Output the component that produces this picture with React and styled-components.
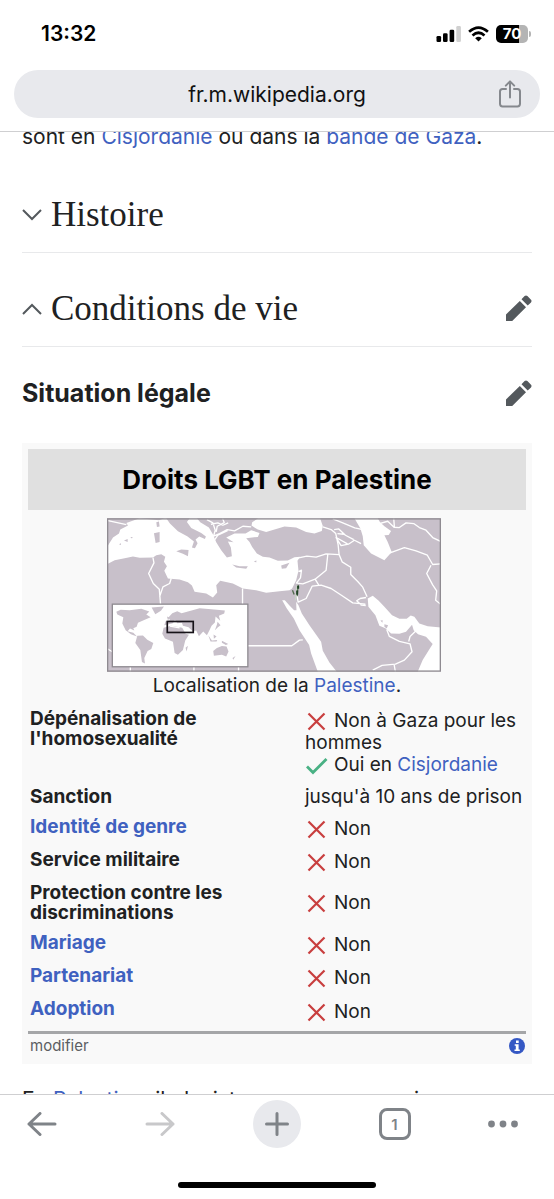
import React from "react";
import styled, { createGlobalStyle } from "styled-components";

const sans = `Inter, "Liberation Sans", sans-serif`;
const serif = `"Liberation Serif", serif`;
const link = "#3f61c0";
const grey = "#7f8388";

const GlobalStyle = createGlobalStyle`
  * { box-sizing: border-box; }
  body { margin: 0; background: #fff; color: #202122; font-family: ${sans}; }
  button { border: 0; padding: 0; background: none; font: inherit; color: inherit; cursor: pointer; }
  svg { display: block; flex: none; }
`;

const Shell = styled.div`
  display: flex;
  flex-direction: column;
  height: 100vh;
`;

const TopChrome = styled.header`
  flex: none;
  padding: 0 14px 13px;
  border-bottom: 1px solid #cfcfd1;
`;

const StatusBar = styled.div`
  display: flex;
  align-items: center;
  justify-content: space-between;
  height: 70px;
  padding: 0 9px 3px 27px;
  color: #000;
`;

const Time = styled.time`
  font-size: 21px;
  font-weight: 600;
`;

const StatusIcons = styled.div`
  display: flex;
  align-items: center;
  gap: 7px;
`;

const AddressBar = styled.div`
  display: grid;
  grid-template-columns: 60px 1fr 60px;
  align-items: center;
  height: 48px;
  border-radius: 24px;
  background: #e8e9ed;
`;

const Address = styled.button`
  grid-column: 2;
  color: #111;
  font-size: 21px;
  text-align: center;
`;

const ShareButton = styled.button`
  display: grid;
  place-items: center;
  height: 48px;
`;

const Page = styled.main`
  flex: 1;
  min-height: 0;
  overflow: hidden auto;
  scrollbar-width: none;
  padding: 0 22px;
`;

const Article = styled.article`
  margin-top: -11px;
`;

const Paragraph = styled.p`
  margin: 0;
  font-size: 21px;
  line-height: 32px;
`;

const Link = styled.a`
  color: ${link};
  text-decoration: none;
`;

const SectionBar = styled.div`
  display: flex;
  align-items: center;
  justify-content: space-between;
  height: 94px;
  margin-top: ${(p) => (p.$first ? "6px" : "0")};
  padding: 33px 0 15px;
  border-bottom: 1px solid #e8e9eb;
`;

const SectionTitle = styled.h2`
  margin: 0;
  font-family: ${serif};
  font-size: 35px;
  font-weight: 400;
  line-height: 44px;
`;

const SectionToggle = styled.button`
  display: flex;
  align-items: center;
  gap: 9px;
`;

const SubsectionBar = styled.div`
  display: flex;
  align-items: center;
  justify-content: space-between;
  height: 96px;
  padding-bottom: 4px;
`;

const SubsectionTitle = styled.h3`
  margin: 0;
  font-size: 25px;
  font-weight: 700;
`;

const EditButton = styled.button`
  display: grid;
  place-items: center;
`;

const Infobox = styled.section`
  margin-bottom: 20px;
  padding: 6px;
  background: #f9f9f9;
`;

const InfoboxTitle = styled.h4`
  margin: 0 0 8px;
  background: #e0e0e0;
  color: #000;
  font-size: 26px;
  font-weight: 700;
  line-height: 61px;
  text-align: center;
`;

const Figure = styled.figure`
  display: flex;
  flex-direction: column;
  align-items: center;
  margin: 0;
`;

const MapFrame = styled.svg`
  margin-right: 6px;
`;

const Caption = styled.figcaption`
  height: 32px;
  font-size: 19px;
  line-height: 28px;
`;

const Facts = styled.table`
  width: 100%;
  border-collapse: collapse;
  border-bottom: 3px solid #a5a6a8;
  font-size: 19px;
`;

const FactRow = styled.tr`
  height: ${(p) => p.$height}px;
`;

const FactName = styled.th`
  width: 277px;
  padding: 5px 8px 5px 2px;
  font-weight: 700;
  line-height: 20px;
  text-align: left;
  vertical-align: top;
`;

const FactValue = styled.td`
  padding: 0;
  line-height: 22px;
  vertical-align: middle;
`;

const Mark = styled.svg`
  display: inline-block;
  margin-right: 5px;
  vertical-align: -5px;
`;

const InfoboxFooter = styled.div`
  display: flex;
  align-items: center;
  justify-content: space-between;
  height: 24px;
  padding: 0 1px 0 2px;
`;

const SmallLink = styled.a`
  color: #5c5e62;
  font-size: 15px;
  text-decoration: none;
`;

const BottomChrome = styled.footer`
  flex: none;
  display: flex;
  flex-direction: column;
  align-items: center;
  justify-content: space-between;
  height: 105px;
  padding: 5px 18px 11px;
  border-top: 1px solid #cfcfd1;
`;

const Toolbar = styled.nav`
  display: flex;
  justify-content: space-between;
  width: 100%;
`;

const ToolButton = styled.button`
  display: flex;
  align-items: center;
  justify-content: ${(p) => (p.$start ? "flex-start" : "center")};
  width: 48px;
  height: 48px;
  border-radius: 50%;
  background: ${(p) => (p.$filled ? "#e8e9ed" : "transparent")};
`;

const TabCount = styled.span`
  width: 32px;
  height: 32px;
  border: 3px solid ${grey};
  border-radius: 8px;
  color: ${grey};
  font-size: 15px;
  font-weight: 600;
  line-height: 27px;
`;

const HomeIndicator = styled.div`
  width: 198px;
  height: 6px;
  border-radius: 3px;
  background: #000;
`;

const Signal = () => (
  <svg width="25" height="16" viewBox="0 0 25 16">
    <rect x="0.5" y="10" width="4.6" height="6" rx="1.3" />
    <rect x="7" y="7.3" width="4.6" height="8.7" rx="1.3" />
    <rect x="13.6" y="3.8" width="4.6" height="12.2" rx="1.3" />
    <rect x="20.3" y="0" width="4.6" height="16" rx="1.3" fill="#d0d0d0" />
  </svg>
);

const Wifi = () => (
  <svg width="21" height="16" viewBox="0 0 21 16" fill="none" stroke="#000" strokeWidth="2.7">
    <path d="M1.1 5.8 Q10.5 -2.6 19.9 5.8" />
    <path d="M4.5 9.4 Q10.5 4.1 16.5 9.4" />
    <path d="M7.2 12.2 Q10.5 9.4 13.8 12.2 L10.5 15.6Z" fill="#000" stroke="none" />
  </svg>
);

const BatteryBox = styled.div`
  display: flex;
  align-items: center;
`;

const BatteryLevel = styled.span`
  width: 32px;
  height: 18px;
  border-radius: 5px;
  background: linear-gradient(90deg, #000 72%, #b4b4b4 72%);
  color: #fff;
  font-size: 15px;
  font-weight: 700;
  line-height: 18px;
  text-align: center;
`;

const BatteryTip = styled.span`
  width: 2px;
  height: 6px;
  margin-left: 1px;
  border-radius: 0 2px 2px 0;
  background: #b4b4b4;
`;

const Share = () => (
  <svg width="22" height="28" viewBox="0 0 22 28" fill="none" stroke="#85888d" strokeWidth="2" strokeLinecap="round" strokeLinejoin="round">
    <path d="M7 9H3.6Q1 9 1 11.6V23.8Q1 26.5 3.6 26.5H18.4Q21 26.5 21 23.8V11.6Q21 9 18.4 9H15M11 17.5V1.5M6.8 5.6 11 1.4l4.2 4.2" />
  </svg>
);

const Chevron = ({ up }) => (
  <svg width="20" height="12" viewBox="0 0 20 12" fill="none" stroke="#54595d" strokeWidth="2">
    <path d={up ? "M1 11 10 2l9 9" : "M1 1l9 9 9-9"} />
  </svg>
);

const Pencil = () => (
  <svg width="27" height="27" viewBox="0 0 27 27" fill="#54595d">
    <path d="M1 19.5 14.8 6l6.2 6.3L7.2 26H1ZM16.5 4.3 19.6 1.1Q21 0 22.4 1.1L26 4.8Q27 6 26 7.4L22.7 10.6Z" />
  </svg>
);

const Cross = () => (
  <Mark width="24" height="22" viewBox="0 0 24 22" fill="none" stroke="#c83e3e" strokeWidth="2.2" role="img" aria-label="Refusé">
    <path d="M3.5 3.5 19.5 19.5M19.5 3.5 3.5 19.5" />
  </Mark>
);

const Check = () => (
  <Mark width="24" height="22" viewBox="0 0 24 22" fill="none" stroke="#49b184" strokeWidth="2.8" role="img" aria-label="Accepté">
    <path d="M2 12.5 8 18.5 21.5 5" />
  </Mark>
);

const InfoIcon = () => (
  <svg width="16" height="16" viewBox="0 0 16 16">
    <circle cx="8" cy="8" r="8" fill="#3558c4" />
    <path d="M7 2.6h2.7v2.3H7ZM5.7 6.3h3.9v5.3h1.2v1.5H5.5v-1.5h1.3V7.8H5.7Z" fill="#fff" />
  </svg>
);

const LocationMap = () => (
  <MapFrame width="334" height="154" viewBox="22 24 1003 461" role="img" aria-label="Carte de localisation">
    <rect x="22" y="24" width="1003" height="461" fill="#c8c0ca" />
    <g fill="#fff">
      <path d="M22 162 45 150 75 144 100 139 120 143 160 142 170 135 185 132 197 140 193 155 202 168 194 182 205 205 240 208 265 216 277 226 285 245 320 250 340 262 353 247 350 225 362 212 400 220 430 235 470 240 500 248 540 243 570 240 578 235 590 210 597 182 594 152 602 140 585 141 565 151 535 152 510 142 490 140 472 130 458 110 450 95 440 84 475 80 480 68 455 60 438 70 405 70 380 82 402 96 385 94 394 112 397 138 382 142 365 120 350 96 340 72 328 52 302 36 292 24 195 24 178 30 120 24 80 38 85 46 62 58 58 70 40 82 22 110Z" />
      <path d="M476 24 458 36 456 46 475 58 500 65 530 56 555 49 590 52 620 65 645 70 667 62 670 47 662 24Z" />
      <path d="M765 24 783 55 790 78 793 105 815 130 855 150 877 125 865 95 855 75 868 74 875 62 855 48 842 36 835 24Z" />
      <path d="M548 270 562 295 583 325 600 360 629 405 635 430 655 485 712 485 690 457 670 422 665 395 630 345 607 310 597 285 590 275 591 300 584 300 570 286 556 270Z" />
      <path d="M805 265 820 257 838 272 855 290 878 315 900 326 922 326 934 316 945 320 960 340 985 348 1025 352V485H955L970 450 984 427 1000 402 980 380 956 372 943 360 938 344 920 365 900 371 875 370 858 354 840 347 828 315 807 290Z" />
    </g>
    <g fill="#c8c0ca">
      <path d="M200 24H270L262 35 275 53 305 68 319 79 316 86 299 79 288 88 294 99 286 114 277 112 283 94 264 79 235 63 211 40Z" />
      <path d="M170 36 178 34 180 49 172 50ZM163 69 180 65 180 95 168 98ZM230 123 245 118 267 119 265 138 250 131ZM398 163 420 168 445 168 440 176 410 172ZM545 166 570 158 560 174 547 176ZM73 91 84 86 84 95ZM92 80 99 80 97 85ZM58 102 64 99 64 104ZM463 153 471 151 470 157ZM843 331 850 330 849 338ZM855 342 866 345 862 355 855 350Z" />
    </g>
    <g fill="none" stroke="#fff" strokeWidth="4" strokeLinejoin="round">
      <path d="M25 31 80 43M160 142 163 158 147 190 161 220 179 237 183 285M215 204 210 220 190 230 180 260M429 235V282M445 407H577L600 390 610 389M22 415 38 425M92 470V485M283 470V485M417 470V485" />
      <path d="M322 28 340 38 347 60 342 78 360 70 383 58 405 62 430 48 455 50M334 42 355 38 370 45 386 38M350 65 353 48 374 37 369 25M343 92 355 75 384 61" />
      <path d="M594 144 622 138 650 141 680 131 719 133M685 133 680 180 647 207 610 221 593 219M597 184 606 180 603 203 590 220M592 252 596 276 620 265 638 228 665 225 695 235 727 256 760 278 798 282M647 207 658 225M782 265 772 272 786 285 799 286M782 265 800 262M719 133 716 103 709 70 695 58 670 50M719 133 728 155 754 171 754 193 775 214 790 231 803 260M709 81 725 106 747 102 765 90 785 100M709 81 744 101M704 58 718 56 738 75 763 88M733 72 714 70M700 26 730 38 766 53 790 58M840 40 865 33 884 51 900 52 920 38 943 40 960 52 980 60 1000 82 1025 94M885 50 883 24M870 129 915 112 950 122 984 135 1000 163 1025 161M995 165 982 190 1000 224 1012 242 1009 270 1025 283M862 358 870 379 900 394 932 401 938 425 915 450 888 462 848 466 820 480M928 394 932 379 950 362M884 462 888 485" />
    </g>
    <path d="m579 240 5 13M596 224 593 258" stroke="#526b4e" strokeWidth="4" fill="none" />
    <path d="M593 225 588 270" stroke="#c6d9c3" strokeWidth="3" />
    <path d="M596 227v9m-3 5v13" stroke="#204225" strokeWidth="6" />
    <rect x="38" y="282" width="407" height="188" fill="#fff" stroke="#8f8b91" strokeWidth="4" />
    <g fill="#c8c0ca">
      <path d="M50 305 63 299 90 300 125 296 149 304 140 313 153 321 132 330 115 338 111 350 101 354 104 361 91 355 84 363 101 368 112 379 94 372 78 360 68 340 71 321 53 313ZM156 292 193 289 184 302 167 312ZM113 377 130 376 143 389 161 399 155 417 144 423 134 444 136 460 127 456 122 420 107 399Z" />
      <path d="M194 345 198 333 211 330 207 321 218 309 233 303 246 309 276 301 300 294 335 297 376 301 374 310 358 317 362 332 348 319 346 337 336 347 329 362 322 375 311 364 298 378 290 361 279 363 267 351 250 347 247 338 233 339 226 329 220 339ZM192 353 214 347 248 353 258 371 268 374 257 391 250 420 235 434 225 429 220 395 196 385 188 371ZM258 413 265 407 261 424ZM341 423 352 414 367 408 381 409 387 424 380 439 367 434 343 437ZM354 335 363 345 355 351 346 360 352 344ZM326 375 337 391 353 390 351 394 333 394ZM342 373 351 379 343 386ZM367 392 386 402 379 405 367 398ZM202 319 211 323 205 330ZM399 444 408 438 401 449Z" />
    </g>
    <path d="M219 342 240 344 250 351 263 355M211 348 240 353" stroke="#fff" strokeWidth="4" fill="none" />
    <rect x="203" y="334" width="78" height="33" fill="none" stroke="#161218" strokeWidth="5" />
    <rect x="24" y="26" width="999" height="457" fill="none" stroke="#8f8b91" strokeWidth="4" />
  </MapFrame>
);

const Back = () => (
  <svg width="30" height="24" viewBox="0 0 30 24" fill="none" stroke={grey} strokeWidth="3" strokeLinecap="round" strokeLinejoin="round">
    <path d="M28 12H2M13 1.5 2 12l11 10.5" />
  </svg>
);

const Forward = () => (
  <svg width="30" height="24" viewBox="0 0 30 24" fill="none" stroke="#c8c8ca" strokeWidth="3" strokeLinecap="round" strokeLinejoin="round">
    <path d="M2 12h26M17 1.5 28 12 17 22.5" />
  </svg>
);

const Plus = () => (
  <svg width="24" height="24" viewBox="0 0 24 24" stroke={grey} strokeWidth="3" strokeLinecap="round">
    <path d="M12 1.5v21M1.5 12h21" />
  </svg>
);

const Dots = () => (
  <svg width="30" height="8" viewBox="0 0 30 8" fill={grey}>
    <circle cx="3.5" cy="4" r="3.4" />
    <circle cx="15" cy="4" r="3.4" />
    <circle cx="26.5" cy="4" r="3.4" />
  </svg>
);

const No = () => (
  <>
    <Cross />
    Non
  </>
);

const facts = [
  {
    name: "Dépénalisation de l'homosexualité",
    height: 78,
    value: (
      <>
        <Cross />
        Non à Gaza pour les hommes
        <br />
        <Check />
        Oui en <Link href="#cisjordanie">Cisjordanie</Link>
      </>
    ),
  },
  { name: "Sanction", height: 30, value: "jusqu'à 10 ans de prison" },
  { name: "Identité de genre", href: "#identite", height: 33, value: <No /> },
  { name: "Service militaire", height: 33, value: <No /> },
  { name: "Protection contre les discriminations", height: 50, value: <No /> },
  { name: "Mariage", href: "#mariage", height: 33, value: <No /> },
  { name: "Partenariat", href: "#partenariat", height: 33, value: <No /> },
  { name: "Adoption", href: "#adoption", height: 38, value: <No /> },
];

export default function App() {
  return (
    <>
      <GlobalStyle />
      <Shell>
        <TopChrome>
          <StatusBar>
            <Time>13:32</Time>
            <StatusIcons>
              <Signal />
              <Wifi />
              <BatteryBox>
                <BatteryLevel>70</BatteryLevel>
                <BatteryTip />
              </BatteryBox>
            </StatusIcons>
          </StatusBar>
          <AddressBar>
            <Address>fr.m.wikipedia.org</Address>
            <ShareButton aria-label="Partager">
              <Share />
            </ShareButton>
          </AddressBar>
        </TopChrome>

        <Page>
          <Article>
            <Paragraph>
              sont en <Link href="#cisjordanie">Cisjordanie</Link> ou dans la{" "}
              <Link href="#gaza">bande de Gaza</Link>.
            </Paragraph>

            <SectionBar $first>
              <SectionTitle>
                <SectionToggle aria-expanded="false">
                  <Chevron />
                  Histoire
                </SectionToggle>
              </SectionTitle>
            </SectionBar>
            <SectionBar>
              <SectionTitle>
                <SectionToggle aria-expanded="true">
                  <Chevron up />
                  Conditions de vie
                </SectionToggle>
              </SectionTitle>
              <EditButton aria-label="Modifier la section">
                <Pencil />
              </EditButton>
            </SectionBar>

            <SubsectionBar>
              <SubsectionTitle>Situation légale</SubsectionTitle>
              <EditButton aria-label="Modifier la sous-section">
                <Pencil />
              </EditButton>
            </SubsectionBar>

            <Infobox>
              <InfoboxTitle>Droits LGBT en Palestine</InfoboxTitle>
              <Figure>
                <LocationMap />
                <Caption>
                  Localisation de la <Link href="#palestine">Palestine</Link>.
                </Caption>
              </Figure>
              <Facts>
                <tbody>
                  {facts.map((f) => (
                    <FactRow key={f.name} $height={f.height}>
                      <FactName scope="row">
                        {f.href ? <Link href={f.href}>{f.name}</Link> : f.name}
                      </FactName>
                      <FactValue>{f.value}</FactValue>
                    </FactRow>
                  ))}
                </tbody>
              </Facts>
              <InfoboxFooter>
                <SmallLink href="#modifier">modifier</SmallLink>
                <a href="#documentation" aria-label="Documentation">
                  <InfoIcon />
                </a>
              </InfoboxFooter>
            </Infobox>

            <Paragraph>
              En <Link href="#palestine">Palestine</Link>, il n'existe aucune reconnaissance
            </Paragraph>
          </Article>
        </Page>

        <BottomChrome>
          <Toolbar>
            <ToolButton aria-label="Retour">
              <Back />
            </ToolButton>
            <ToolButton aria-label="Suivant">
              <Forward />
            </ToolButton>
            <ToolButton aria-label="Nouvel onglet" $filled>
              <Plus />
            </ToolButton>
            <ToolButton aria-label="Onglets">
              <TabCount>1</TabCount>
            </ToolButton>
            <ToolButton aria-label="Plus" $start>
              <Dots />
            </ToolButton>
          </Toolbar>
          <HomeIndicator />
        </BottomChrome>
      </Shell>
    </>
  );
}
